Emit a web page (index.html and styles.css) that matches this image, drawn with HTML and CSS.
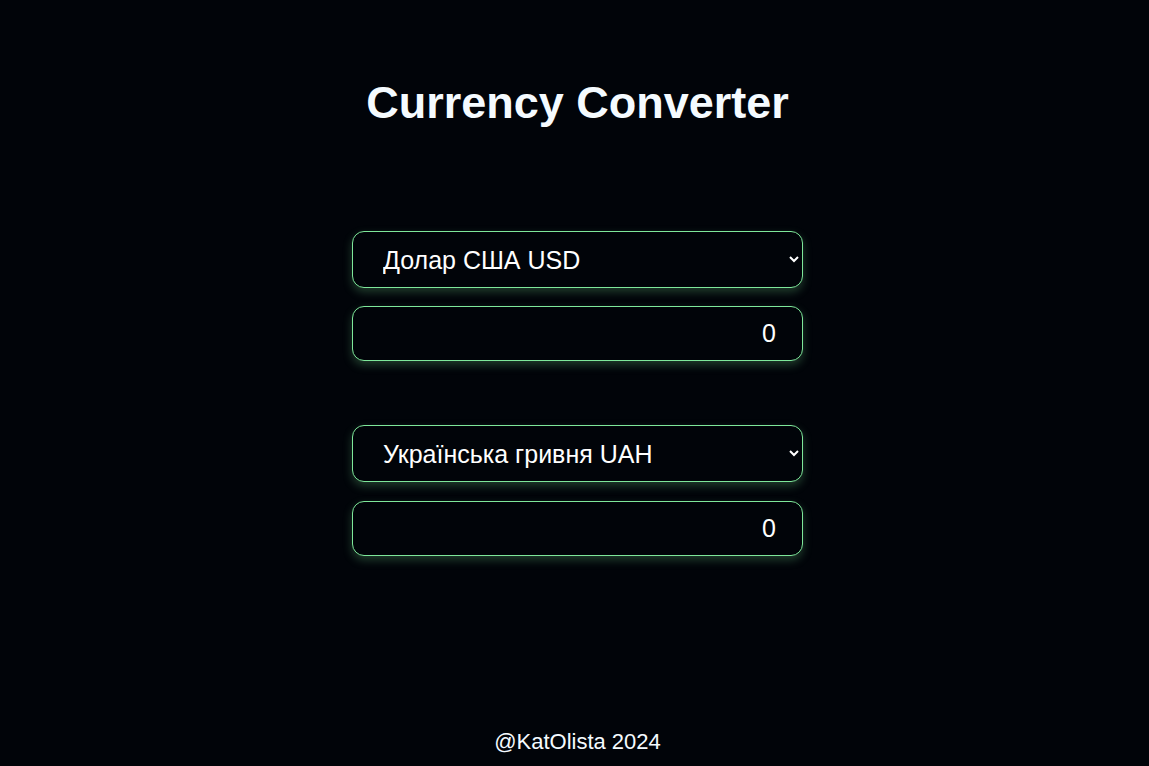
FILE: index.html
```html
<!DOCTYPE html>
<html lang="uk">
<head>
<meta charset="utf-8">
<title>Currency Converter</title>
<link rel="stylesheet" href="styles.css">
</head>
<body>
<main class="page">
  <h1 class="title">Currency Converter</h1>
  <div class="converter">
    <div class="group">
      <select class="field select">
        <option>Долар США USD</option>
      </select>
      <input class="field amount" type="number" value="0">
    </div>
    <div class="group group-second">
      <select class="field select">
        <option>Українська гривня UAH</option>
      </select>
      <input class="field amount" type="number" value="0">
    </div>
  </div>
  <footer class="footer">@KatOlista 2024</footer>
</main>
</body>
</html>
```
FILE: styles.css
```css
html, body {
  margin: 0;
  padding: 0;
  background: #010409;
  color: #f5fbff;
  font-family: "Liberation Sans", Arial, sans-serif;
}
.page {
  height: 766px;
  box-sizing: border-box;
  display: flex;
  flex-direction: column;
  align-items: center;
  padding-top: 77px;
  padding-left: 6px;
}
.title {
  margin: 0;
  font-size: 45px;
  font-weight: 700;
  line-height: 52px;
}
.converter {
  margin-top: 102px;
  width: 451px;
  display: flex;
  flex-direction: column;
  gap: 64px;
}
.group {
  display: flex;
  flex-direction: column;
  gap: 18px;
}
.group-second {
  gap: 19px;
}
.field {
  box-sizing: border-box;
  width: 100%;
  background: #010409;
  color: #ffffff;
  border: 1px solid #7ee79a;
  border-radius: 12px;
  box-shadow: 0 4px 10px rgba(126, 231, 150, 0.25);
  font-family: "Liberation Sans", Arial, sans-serif;
  font-size: 25px;
  outline: none;
}
.select {
  height: 57px;
  padding: 0 8px 0 26px;
  color-scheme: dark;
}
.amount {
  height: 55px;
  padding: 0 26px 0 26px;
  text-align: right;
}
.amount::-webkit-inner-spin-button,
.amount::-webkit-outer-spin-button {
  -webkit-appearance: none;
  margin: 0;
}
.footer {
  margin-top: auto;
  margin-bottom: 11px;
  font-size: 22px;
  line-height: 26px;
}
```
